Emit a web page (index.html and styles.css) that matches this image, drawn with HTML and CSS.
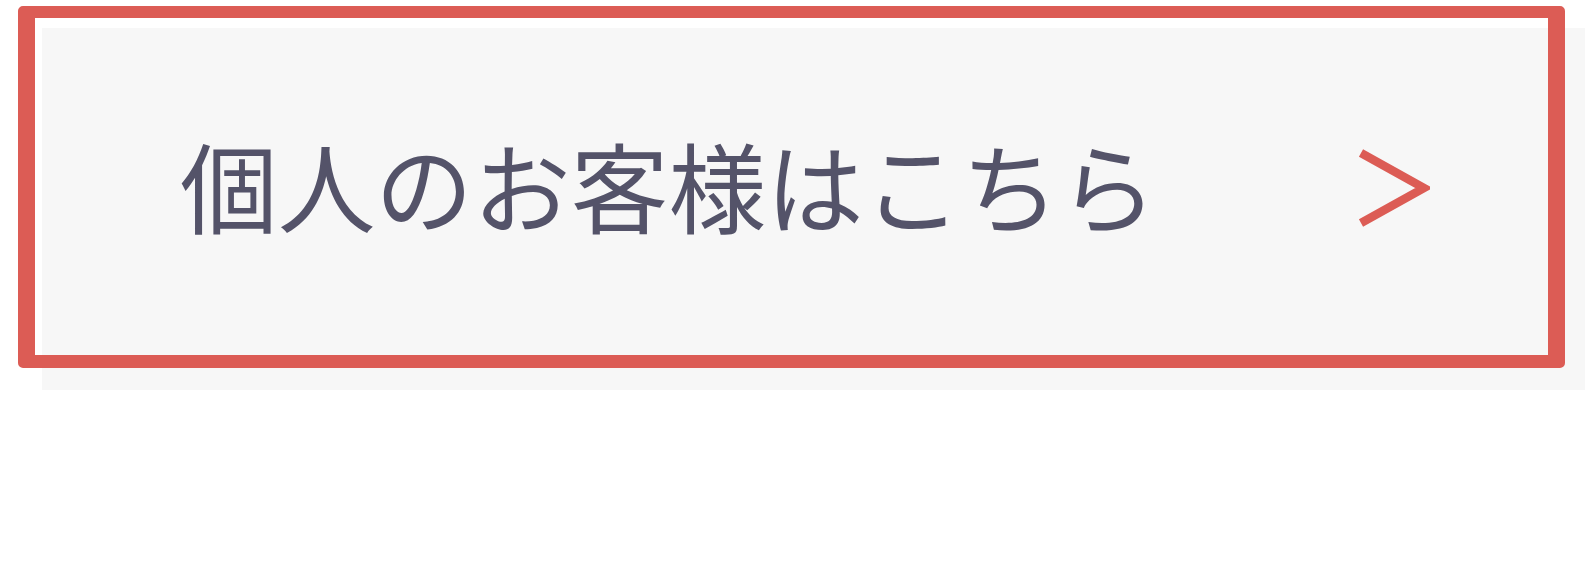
FILE: index.html
```html
<!DOCTYPE html>
<html lang="ja">
<head>
<meta charset="utf-8">
<link rel="stylesheet" href="styles.css">
</head>
<body>
<div class="page">
  <a class="cta" href="#">
    <span class="cta-label">個人のお客様はこちら</span>
    <svg class="cta-arrow" width="76" height="78" viewBox="0 0 76 78">
      <polyline points="7,4 70,39 7,74" fill="none" stroke="#dc5c55" stroke-width="8.5"/>
    </svg>
  </a>
</div>
</body>
</html>
```
FILE: styles.css
```css
html, body {
  margin: 0;
  padding: 0;
  background: #ffffff;
}
.page {
  position: relative;
  z-index: 0;
  padding: 6px 0 0 18px;
  width: 1585px;
  height: 570px;
  box-sizing: border-box;
  overflow: hidden;
}
.cta {
  position: relative;
  display: flex;
  align-items: center;
  justify-content: space-between;
  box-sizing: border-box;
  width: 1547px;
  height: 362px;
  border-style: solid;
  border-color: #dc5c55;
  border-width: 12px 17px 13px 17px;
  border-radius: 5px;
  padding: 0 118px 0 145px;
  text-decoration: none;
}
.cta::before {
  content: "";
  position: absolute;
  z-index: -1;
  left: 7px;
  top: 10px;
  width: 1547px;
  height: 362px;
  background: #f7f7f7;
}
.cta-label {
  font-family: "Noto Sans CJK JP", "Noto Sans", sans-serif;
  font-size: 97.7px;
  font-weight: 400;
  color: #545369;
  line-height: 1;
  padding-bottom: 6px;
}
.cta-arrow {
  display: block;
  margin-top: 3px;
}
```
